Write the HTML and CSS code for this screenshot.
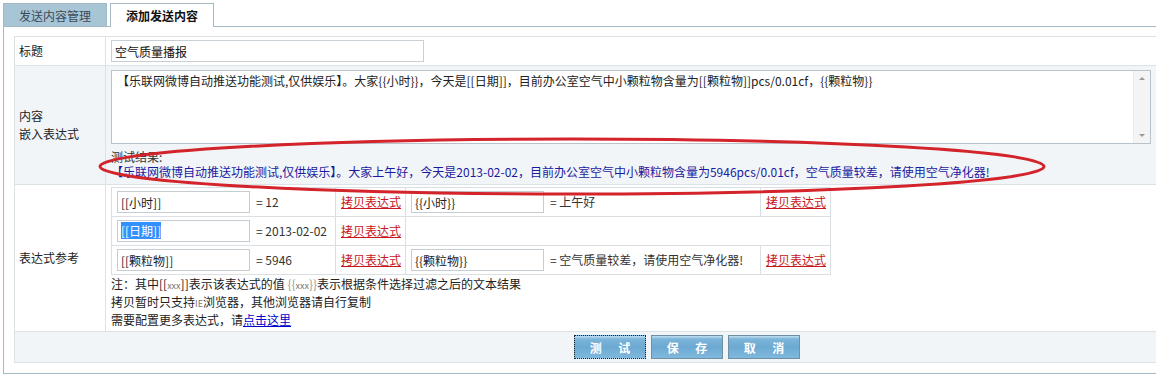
FILE: index.html
```html
<!DOCTYPE html>
<html lang="zh-CN">
<head>
    <meta charset="UTF-8">
    <title>添加发送内容</title>
    <link rel="stylesheet" href="styles.css">
</head>
<body>
    <div class="tabs">
        <a class="tab" href="#">发送内容管理</a>
        <a class="tab tab-active" href="#">添加发送内容</a>
    </div>

    <div class="panel">
        <table class="form-table">
            <tr>
                <th>标题</th>
                <td><input type="text" class="title-input" value="空气质量播报"></td>
            </tr>
            <tr class="row-alt">
                <th>内容<br>嵌入表达式</th>
                <td class="content-cell">
                    <div class="content-box">
                        <textarea class="content-input">【乐联网微博自动推送功能测试,仅供娱乐】。大家{{小时}}，今天是[[日期]]，目前办公室空气中小颗粒物含量为[[颗粒物]]pcs/0.01cf，{{颗粒物}}</textarea>
                        <div class="scrollbar">
                            <span class="arrow arrow-up"></span>
                            <span class="arrow arrow-down"></span>
                        </div>
                    </div>
                    <div class="test-label">测试结果:</div>
                    <div class="test-result">【乐联网微博自动推送功能测试,仅供娱乐】。大家上午好，今天是2013-02-02，目前办公室空气中小颗粒物含量为5946pcs/0.01cf，空气质量较差，请使用空气净化器!</div>
                </td>
            </tr>
            <tr>
                <th>表达式参考</th>
                <td class="ref-cell">
                    <table class="expr-table">
                        <colgroup>
                            <col class="col-expr">
                            <col class="col-copy">
                            <col class="col-expr-wide">
                            <col class="col-copy">
                        </colgroup>
                        <tr>
                            <td><input type="text" class="expr-input" value="[[小时]]" readonly><span class="expr-value">= 12</span></td>
                            <td><a href="#" class="copy-link">拷贝表达式</a></td>
                            <td><input type="text" class="expr-input" value="{{小时}}" readonly><span class="expr-value">= 上午好</span></td>
                            <td><a href="#" class="copy-link">拷贝表达式</a></td>
                        </tr>
                        <tr>
                            <td><span class="expr-input fake-input"><span class="selected">[[日期]]</span></span><span class="expr-value">= 2013-02-02</span></td>
                            <td><a href="#" class="copy-link">拷贝表达式</a></td>
                            <td colspan="2"></td>
                        </tr>
                        <tr>
                            <td><input type="text" class="expr-input" value="[[颗粒物]]" readonly><span class="expr-value">= 5946</span></td>
                            <td><a href="#" class="copy-link">拷贝表达式</a></td>
                            <td><input type="text" class="expr-input" value="{{颗粒物}}" readonly><span class="expr-value">= 空气质量较差，请使用空气净化器!</span></td>
                            <td><a href="#" class="copy-link">拷贝表达式</a></td>
                        </tr>
                    </table>
                    <div class="notes">
                        <div>注：其中[[<span class="tiny">xxx</span>]]表示该表达式的值 <span class="muted">{{<span class="tiny">xxx</span>}}</span>表示根据条件选择过滤之后的文本结果</div>
                        <div>拷贝暂时只支持<span class="tiny">IE</span>浏览器，其他浏览器请自行复制</div>
                        <div>需要配置更多表达式，请<a href="#" class="more-link">点击这里</a></div>
                    </div>
                </td>
            </tr>
            <tr class="row-alt">
                <td colspan="2" class="actions">
                    <div class="btn-bar">
                        <button type="button" class="btn btn-focus">测 试</button>
                        <button type="button" class="btn">保 存</button>
                        <button type="button" class="btn">取 消</button>
                    </div>
                </td>
            </tr>
        </table>
    </div>

    <!-- red annotation drawn over the test result -->
    <svg class="mark" width="1156" height="377" viewBox="0 0 1156 377">
        <ellipse cx="572" cy="166.5" rx="472" ry="27.5" fill="none" stroke="#d3232b" stroke-width="3"/>
    </svg>
</body>
</html>
```

FILE: styles.css
```css
html, body {
    overflow: hidden;
}

body {
    position: relative;
    margin: 0;
    padding: 3px;
    font-family: "Noto Sans CJK SC", "Liberation Sans", sans-serif;
    font-size: 12px;
    color: #222222;
    background: #ffffff;
}

/* Tabs */
.tabs {
    display: flex;
    gap: 3px;
    height: 23px;
}

.tab {
    width: 104px;
    height: 23px;
    line-height: 23px;
    box-sizing: border-box;
    text-align: center;
    color: #3a4a56;
    text-decoration: none;
    background: #a8c5d6;
    border: 1px solid #a3bac6;
    border-bottom: none;
}

.tab-active {
    position: relative;
    z-index: 1;
    height: 24px;
    color: #111111;
    font-weight: bold;
    background: #ffffff;
}

/* Panel */
.panel {
    width: 1170px;
    box-sizing: border-box;
    padding: 9px 10px 10px;
    border: 1px solid #a3bac6;
}

.form-table {
    width: 1146px;
    border-collapse: collapse;
}

.form-table > tbody > tr > th,
.form-table > tbody > tr > td {
    border: 1px solid #dce3e7;
}

.form-table > tbody > tr > th {
    width: 82px;
    padding: 0 4px;
    text-align: left;
    font-weight: normal;
    line-height: 18px;
}

.form-table > tbody > tr > td {
    padding: 3px 5px;
}

.row-alt > th,
.row-alt > td {
    background: #f2f5f7;
}

.title-input {
    display: block;
    width: 313px;
    height: 22px;
    box-sizing: border-box;
    padding: 0 3px;
    border: 1px solid #c9d0d5;
    font: inherit;
    color: #111111;
}

.content-cell {
    padding-bottom: 5px !important;
}

/* textarea with its classic scrollbar */
.content-box {
    display: flex;
    width: 1040px;
    height: 74px;
    box-sizing: border-box;
    margin-top: 1px;
    border: 1px solid #b9c2c8;
    background: #ffffff;
}

.content-input {
    flex: 1;
    padding: 2px 5px;
    border: none;
    outline: none;
    font: inherit;
    line-height: 16px;
    color: #222222;
    resize: none;
    overflow: hidden;
}

.scrollbar {
    display: flex;
    flex-direction: column;
    justify-content: space-between;
    align-items: center;
    width: 17px;
    padding: 6px 0;
    box-sizing: border-box;
    background: #f4f4f4;
    border-left: 1px solid #ececec;
}

.arrow {
    width: 0;
    height: 0;
    border-left: 3px solid transparent;
    border-right: 3px solid transparent;
}

.arrow-up {
    border-bottom: 3px solid #9a9a9a;
}

.arrow-down {
    border-top: 3px solid #9a9a9a;
}

.test-label {
    margin-top: 5px;
    line-height: 15px;
    color: #333333;
}

.test-result {
    line-height: 15px;
    color: #1a1aa0;
}

/* Expression reference */
.ref-cell {
    padding-top: 2px !important;
    padding-bottom: 2px !important;
}

.expr-table {
    width: 720px;
    table-layout: fixed;
    border-collapse: collapse;
}

.col-expr { width: 224px; }
.col-copy { width: 70px; }
.col-expr-wide { width: 355px; }

.expr-table td {
    height: 22px;
    padding: 3px 5px;
    line-height: 22px;
    border: 1px solid #dadfe3;
    white-space: nowrap;
}

.expr-input {
    display: inline-block;
    width: 133px;
    height: 22px;
    box-sizing: border-box;
    margin-right: 6px;
    padding: 0 3px;
    border: 1px solid #c6cdd2;
    font: inherit;
    line-height: 20px;
    color: #222222;
    vertical-align: top;
    background: #ffffff;
}

.selected {
    background: #3390ff;
    color: #ffffff;
}

.expr-value {
    color: #333333;
}

.copy-link {
    color: #c8161d;
}

.notes {
    line-height: 18px;
}

.tiny {
    font-size: 9px;
    line-height: 1;
    color: #777777;
}

.muted {
    color: #999999;
}

.more-link {
    color: #0000cc;
}

/* Buttons */
.actions {
    padding: 3px 5px 3px 559px !important;
}

.btn-bar {
    display: flex;
    gap: 5px;
}

.btn {
    width: 72px;
    height: 24px;
    padding: 0 0 0 7px;
    border: 1px solid #6f8fa3;
    background: linear-gradient(#c2e0f2 0, #7db5da 3px, #6ca9d2 50%, #80b9dd 100%);
    color: #ffffff;
    font-family: inherit;
    font-size: 12px;
    font-weight: bold;
    letter-spacing: 7px;
    cursor: pointer;
}

.btn-focus {
    border: 1px dotted #222222;
}

.mark {
    position: absolute;
    top: 0;
    left: 0;
    pointer-events: none;
}
```
